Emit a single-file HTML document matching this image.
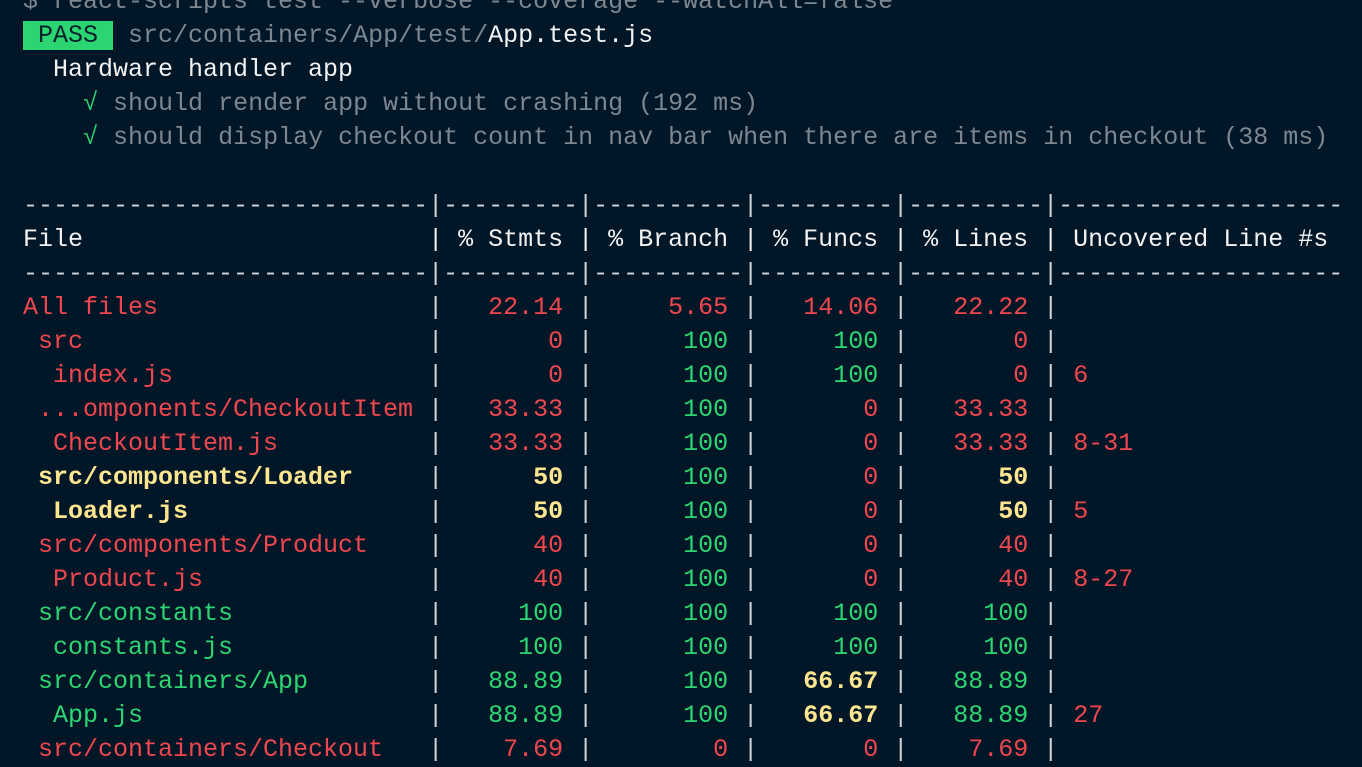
<!DOCTYPE html>
<html><head><meta charset="utf-8"><style>
html,body{margin:0;padding:0;background:#011627;width:1362px;height:742px;overflow:hidden}
pre{position:absolute;left:23px;top:-15px;margin:0;font-family:"Liberation Mono",monospace;font-size:25px;line-height:34px;color:#d6dadf;white-space:pre}
.r{color:#f0474f}.g{color:#2bd672}.y{color:#fde68f;font-weight:bold}.w{color:#f2f2f2}.d{color:#7d8790}
.p{color:#cfd3d6}
.pass{background:#2bd672;color:#06202b}
</style></head><body><pre><span class="d">$ react-scripts test --verbose --coverage --watchAll=false</span>
<span class="pass"> PASS </span> <span class="d">src/containers/App/test/</span><span class="w">App.test.js</span>
<span class="w">  Hardware handler app</span>
    <span class="g">√</span> <span class="d">should render app without crashing (192 ms)</span>
    <span class="g">√</span> <span class="d">should display checkout count in nav bar when there are items in checkout (38 ms)</span>

<span class="p">---------------------------|---------|----------|---------|---------|-------------------</span>
<span class="w">File                       | % Stmts | % Branch | % Funcs | % Lines | Uncovered Line #s</span>
<span class="p">---------------------------|---------|----------|---------|---------|-------------------</span>
<span class="r">All files                  </span><span class="p">|</span><span class="r">   22.14 </span><span class="p">|</span><span class="r">     5.65 </span><span class="p">|</span><span class="r">   14.06 </span><span class="p">|</span><span class="r">   22.22 </span><span class="p">|</span>
<span class="r"> src                       </span><span class="p">|</span><span class="r">       0 </span><span class="p">|</span><span class="g">      100 </span><span class="p">|</span><span class="g">     100 </span><span class="p">|</span><span class="r">       0 </span><span class="p">|</span>
<span class="r">  index.js                 </span><span class="p">|</span><span class="r">       0 </span><span class="p">|</span><span class="g">      100 </span><span class="p">|</span><span class="g">     100 </span><span class="p">|</span><span class="r">       0 </span><span class="p">|</span><span class="r"> 6</span>
<span class="r"> ...omponents/CheckoutItem </span><span class="p">|</span><span class="r">   33.33 </span><span class="p">|</span><span class="g">      100 </span><span class="p">|</span><span class="r">       0 </span><span class="p">|</span><span class="r">   33.33 </span><span class="p">|</span>
<span class="r">  CheckoutItem.js          </span><span class="p">|</span><span class="r">   33.33 </span><span class="p">|</span><span class="g">      100 </span><span class="p">|</span><span class="r">       0 </span><span class="p">|</span><span class="r">   33.33 </span><span class="p">|</span><span class="r"> 8-31</span>
<span class="y"> src/components/Loader     </span><span class="p">|</span><span class="y">      50 </span><span class="p">|</span><span class="g">      100 </span><span class="p">|</span><span class="r">       0 </span><span class="p">|</span><span class="y">      50 </span><span class="p">|</span>
<span class="y">  Loader.js                </span><span class="p">|</span><span class="y">      50 </span><span class="p">|</span><span class="g">      100 </span><span class="p">|</span><span class="r">       0 </span><span class="p">|</span><span class="y">      50 </span><span class="p">|</span><span class="r"> 5</span>
<span class="r"> src/components/Product    </span><span class="p">|</span><span class="r">      40 </span><span class="p">|</span><span class="g">      100 </span><span class="p">|</span><span class="r">       0 </span><span class="p">|</span><span class="r">      40 </span><span class="p">|</span>
<span class="r">  Product.js               </span><span class="p">|</span><span class="r">      40 </span><span class="p">|</span><span class="g">      100 </span><span class="p">|</span><span class="r">       0 </span><span class="p">|</span><span class="r">      40 </span><span class="p">|</span><span class="r"> 8-27</span>
<span class="g"> src/constants             </span><span class="p">|</span><span class="g">     100 </span><span class="p">|</span><span class="g">      100 </span><span class="p">|</span><span class="g">     100 </span><span class="p">|</span><span class="g">     100 </span><span class="p">|</span>
<span class="g">  constants.js             </span><span class="p">|</span><span class="g">     100 </span><span class="p">|</span><span class="g">      100 </span><span class="p">|</span><span class="g">     100 </span><span class="p">|</span><span class="g">     100 </span><span class="p">|</span>
<span class="g"> src/containers/App        </span><span class="p">|</span><span class="g">   88.89 </span><span class="p">|</span><span class="g">      100 </span><span class="p">|</span><span class="y">   66.67 </span><span class="p">|</span><span class="g">   88.89 </span><span class="p">|</span>
<span class="g">  App.js                   </span><span class="p">|</span><span class="g">   88.89 </span><span class="p">|</span><span class="g">      100 </span><span class="p">|</span><span class="y">   66.67 </span><span class="p">|</span><span class="g">   88.89 </span><span class="p">|</span><span class="r"> 27</span>
<span class="r"> src/containers/Checkout   </span><span class="p">|</span><span class="r">    7.69 </span><span class="p">|</span><span class="r">        0 </span><span class="p">|</span><span class="r">       0 </span><span class="p">|</span><span class="r">    7.69 </span><span class="p">|</span>
</pre></body></html>
